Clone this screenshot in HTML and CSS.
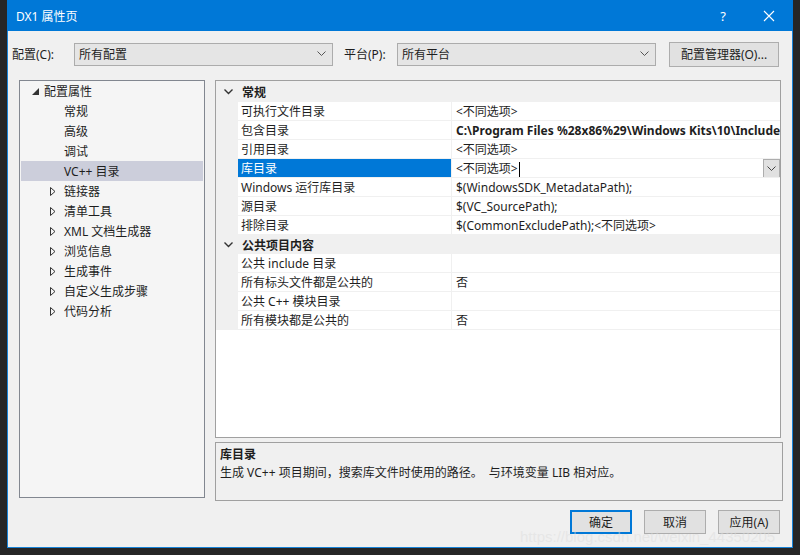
FILE: index.html
```html
<!DOCTYPE html>
<html lang="zh-CN">
<head>
    <meta charset="UTF-8">
    <title>DX1 属性页</title>
    <link rel="stylesheet" href="styles.css">
</head>
<body>
    <div class="dialog">
        <div class="title-bar">
            <span class="title-text">DX1 属性页</span>
            <span class="title-help">?</span>
            <span class="title-close">
                <svg width="12" height="12" viewBox="0 0 12 12"><path d="M1 1 L11 11 M11 1 L1 11" stroke="#fff" stroke-width="1.1" fill="none"/></svg>
            </span>
        </div>

        <div class="toolbar">
            <label class="tb-label">配置(C):</label>
            <div class="combo combo-config">
                <span>所有配置</span>
                <svg class="combo-arrow" width="9" height="6" viewBox="0 0 9 6"><path d="M0.5 0.5 L4.5 4.5 L8.5 0.5" stroke="#555" fill="none"/></svg>
            </div>
            <label class="tb-label tb-label-platform">平台(P):</label>
            <div class="combo combo-platform">
                <span>所有平台</span>
                <svg class="combo-arrow" width="9" height="6" viewBox="0 0 9 6"><path d="M0.5 0.5 L4.5 4.5 L8.5 0.5" stroke="#555" fill="none"/></svg>
            </div>
            <button class="btn btn-manager">配置管理器(O)...</button>
        </div>

        <div class="main">
            <div class="tree">
                <div class="tree-row">
                    <span class="twisty"><svg width="7" height="7" viewBox="0 0 7 7"><path d="M7 0 L7 7 L0 7 Z" fill="#333"/></svg></span>
                    <span>配置属性</span>
                </div>
                <div class="tree-row child"><span>常规</span></div>
                <div class="tree-row child"><span>高级</span></div>
                <div class="tree-row child"><span>调试</span></div>
                <div class="tree-row child selected"><span>VC++ 目录</span></div>
                <div class="tree-row sub"><span class="twisty"><svg width="6" height="9" viewBox="0 0 6 9"><path d="M0.5 0.5 L5 4.5 L0.5 8.5 Z" stroke="#333" fill="none"/></svg></span><span>链接器</span></div>
                <div class="tree-row sub"><span class="twisty"><svg width="6" height="9" viewBox="0 0 6 9"><path d="M0.5 0.5 L5 4.5 L0.5 8.5 Z" stroke="#333" fill="none"/></svg></span><span>清单工具</span></div>
                <div class="tree-row sub"><span class="twisty"><svg width="6" height="9" viewBox="0 0 6 9"><path d="M0.5 0.5 L5 4.5 L0.5 8.5 Z" stroke="#333" fill="none"/></svg></span><span>XML 文档生成器</span></div>
                <div class="tree-row sub"><span class="twisty"><svg width="6" height="9" viewBox="0 0 6 9"><path d="M0.5 0.5 L5 4.5 L0.5 8.5 Z" stroke="#333" fill="none"/></svg></span><span>浏览信息</span></div>
                <div class="tree-row sub"><span class="twisty"><svg width="6" height="9" viewBox="0 0 6 9"><path d="M0.5 0.5 L5 4.5 L0.5 8.5 Z" stroke="#333" fill="none"/></svg></span><span>生成事件</span></div>
                <div class="tree-row sub"><span class="twisty"><svg width="6" height="9" viewBox="0 0 6 9"><path d="M0.5 0.5 L5 4.5 L0.5 8.5 Z" stroke="#333" fill="none"/></svg></span><span>自定义生成步骤</span></div>
                <div class="tree-row sub"><span class="twisty"><svg width="6" height="9" viewBox="0 0 6 9"><path d="M0.5 0.5 L5 4.5 L0.5 8.5 Z" stroke="#333" fill="none"/></svg></span><span>代码分析</span></div>
            </div>

            <div class="right-col">
                <div class="prop-grid">
                    <div class="cat-row first">
                        <span class="cat-chev"><svg width="9" height="6" viewBox="0 0 9 6"><path d="M0.5 0.5 L4.5 4.5 L8.5 0.5" stroke="#333" stroke-width="1.4" fill="none"/></svg></span>
                        <span class="cat-name">常规</span>
                    </div>
                    <div class="prop-row"><span class="gutter"></span><span class="p-name">可执行文件目录</span><span class="p-value">&lt;不同选项&gt;</span></div>
                    <div class="prop-row"><span class="gutter"></span><span class="p-name">包含目录</span><span class="p-value bold">C:\Program Files %28x86%29\Windows Kits\10\Include\10.0.17763.0\um</span></div>
                    <div class="prop-row"><span class="gutter"></span><span class="p-name">引用目录</span><span class="p-value">&lt;不同选项&gt;</span></div>
                    <div class="prop-row active"><span class="gutter"></span><span class="p-name">库目录</span><span class="p-value">&lt;不同选项&gt;<span class="caret"></span>
                        <span class="drop-btn"><svg width="9" height="6" viewBox="0 0 9 6"><path d="M0.5 0.5 L4.5 4.5 L8.5 0.5" stroke="#444" fill="none"/></svg></span></span></div>
                    <div class="prop-row"><span class="gutter"></span><span class="p-name">Windows 运行库目录</span><span class="p-value">$(WindowsSDK_MetadataPath);</span></div>
                    <div class="prop-row"><span class="gutter"></span><span class="p-name">源目录</span><span class="p-value">$(VC_SourcePath);</span></div>
                    <div class="prop-row"><span class="gutter"></span><span class="p-name">排除目录</span><span class="p-value">$(CommonExcludePath);&lt;不同选项&gt;</span></div>
                    <div class="cat-row">
                        <span class="cat-chev"><svg width="9" height="6" viewBox="0 0 9 6"><path d="M0.5 0.5 L4.5 4.5 L8.5 0.5" stroke="#333" stroke-width="1.4" fill="none"/></svg></span>
                        <span class="cat-name">公共项目内容</span>
                    </div>
                    <div class="prop-row"><span class="gutter"></span><span class="p-name">公共 include 目录</span><span class="p-value"></span></div>
                    <div class="prop-row"><span class="gutter"></span><span class="p-name">所有标头文件都是公共的</span><span class="p-value">否</span></div>
                    <div class="prop-row"><span class="gutter"></span><span class="p-name">公共 C++ 模块目录</span><span class="p-value"></span></div>
                    <div class="prop-row"><span class="gutter"></span><span class="p-name">所有模块都是公共的</span><span class="p-value">否</span></div>
                </div>

                <div class="desc-box">
                    <div class="desc-title">库目录</div>
                    <div class="desc-text">生成 VC++ 项目期间，搜索库文件时使用的路径。&nbsp; 与环境变量 LIB 相对应。</div>
                </div>
            </div>
        </div>

        <div class="footer">
            <button class="btn btn-default">确定</button>
            <button class="btn">取消</button>
            <button class="btn">应用(A)</button>
        </div>
    </div>

    <div class="watermark">https://blog.csdn.net/weixin_44350205</div>
</body>
</html>
```

FILE: styles.css
```css
body {
    margin: 0;
    background-color: #262626;
    width: 800px;
    height: 555px;
    overflow: hidden;
    position: relative;
    font-family: "Noto Sans", "Noto Sans CJK SC", sans-serif;
    font-size: 12px;
    color: #1e1e1e;
}
.dialog {
    margin-left: 7px;
    width: 784px;
    height: 547px;
    background-color: #f0f0f0;
    border: 1px solid #1883d7;
    border-top: none;
    display: flex;
    flex-direction: column;
}
.title-bar {
    height: 31px;
    background-color: #0078d7;
    color: #fff;
    display: flex;
    align-items: center;
    margin: 0 -1px;
    padding-left: 9px;
}
.title-text {
    flex: 1;
    font-size: 12px;
}
.title-help {
    width: 46px;
    text-align: center;
    font-size: 13px;
}
.title-close {
    width: 46px;
    display: flex;
    justify-content: center;
    margin-right: 1px;
}
.toolbar {
    display: flex;
    align-items: center;
    margin-top: 11px;
    padding-left: 4px;
    height: 24px;
}
.tb-label {
    width: 62px;
}
.tb-label-platform {
    width: 53px;
    margin-left: 11px;
}
.combo {
    border: 1px solid #acacac;
    background-color: #e5e5e5;
    display: flex;
    align-items: center;
    padding: 0 6px 0 4px;
    box-sizing: border-box;
    height: 23px;
}
.combo span {
    flex: 1;
}
.combo-config {
    width: 259px;
}
.combo-platform {
    width: 259px;
}
.btn {
    font-family: inherit;
    font-size: 12px;
    color: #1e1e1e;
    background-color: #e1e1e1;
    border: 1px solid #adadad;
    height: 24px;
    padding: 0;
}
.btn-manager {
    width: 110px;
    margin-left: 13px;
    height: 25px;
}
.main {
    display: flex;
    margin-top: 14px;
    padding-left: 11px;
    gap: 10px;
}
.tree {
    width: 184px;
    height: 416px;
    background-color: #f5f5f5;
    border: 1px solid #828790;
}
.tree-row {
    height: 20px;
    display: flex;
    align-items: center;
    padding-left: 12px;
}
.tree-row .twisty {
    width: 12px;
    display: flex;
    align-items: center;
}
.tree-row.child {
    padding-left: 44px;
}
.tree-row.sub {
    padding-left: 30px;
}
.tree-row.sub .twisty {
    width: 14px;
}
.tree-row.selected {
    background-color: #cccedb;
    margin: 0 1px;
    padding-left: 43px;
}
.right-col {
    display: flex;
    flex-direction: column;
    gap: 4px;
}
.prop-grid {
    width: 564px;
    height: 356px;
    border: 1px solid #a0a0a0;
    background-color: #fff;
    overflow: hidden;
}
.cat-row {
    height: 19px;
    display: flex;
    align-items: center;
    background-color: #f0f0f0;
    font-weight: bold;
}
.cat-row.first {
    height: 21px;
    padding-top: 1px;
    box-sizing: border-box;
}
.cat-chev {
    width: 22px;
    display: flex;
    justify-content: center;
    padding-left: 1px;
}
.cat-name {
    padding-left: 3px;
}
.prop-row {
    height: 19px;
    display: grid;
    grid-template-columns: 22px 213px 1fr;
    white-space: nowrap;
}
.gutter {
    background-color: #f0f0f0;
}
.p-name {
    padding-left: 3px;
    line-height: 19px;
    height: 18px;
    border-bottom: 1px solid #f0f0f0;
    overflow: hidden;
}
.p-value {
    padding-left: 4px;
    line-height: 19px;
    height: 18px;
    border-left: 1px solid #f0f0f0;
    border-bottom: 1px solid #f0f0f0;
    overflow: hidden;
    position: relative;
}
.p-value.bold {
    font-weight: bold;
}
.prop-row.active .p-name {
    background-color: #0078d7;
    color: #fff;
}
.caret {
    display: inline-block;
    width: 1px;
    height: 15px;
    background-color: #000;
    vertical-align: middle;
    margin-left: 1px;
}
.drop-btn {
    position: absolute;
    right: 0;
    top: 0;
    width: 15px;
    height: 17px;
    border: 1px solid #adadad;
    background-color: #e1e1e1;
    display: flex;
    align-items: center;
    justify-content: center;
}
.desc-box {
    width: 560px;
    height: 54px;
    border: 1px solid #a0a0a0;
    padding: 3px 2px 0 4px;
    line-height: 18px;
}
.desc-title {
    font-weight: bold;
}
.footer {
    display: flex;
    justify-content: flex-end;
    gap: 12px;
    padding-right: 12px;
    margin-top: 9px;
}
.footer .btn {
    width: 62px;
}
.btn-default {
    border: 2px solid #0078d7;
}
.watermark {
    position: absolute;
    left: 520px;
    top: 528px;
    font-family: "Liberation Sans", sans-serif;
    font-size: 15px;
    color: rgba(220, 220, 220, 0.5);
    white-space: nowrap;
}
```
